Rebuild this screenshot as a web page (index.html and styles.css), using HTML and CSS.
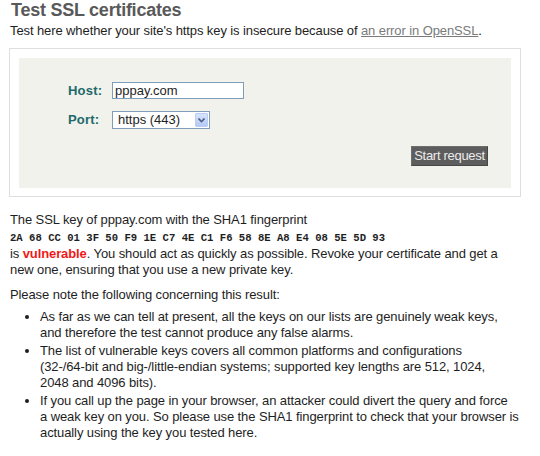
FILE: index.html
```html
<!DOCTYPE html>
<html lang="en">
<head>
    <meta charset="UTF-8">
    <meta name="viewport" content="width=device-width, initial-scale=1.0">
    <title>Test SSL certificates</title>
    <link rel="stylesheet" href="styles.css">
</head>
<body>
    <div class="page">
        <h1>Test SSL certificates</h1>
        <p class="intro">Test here whether your site's https key is insecure because of <a href="#">an error in OpenSSL</a>.</p>

        <div class="panel">
            <form class="check-form">
                <div class="row">
                    <label for="host">Host:</label>
                    <input type="text" id="host" value="pppay.com">
                </div>
                <div class="row">
                    <label for="port">Port:</label>
                    <div class="select-wrap">
                        <select id="port">
                            <option>https (443)</option>
                            <option>imaps (993)</option>
                            <option>pop3s (995)</option>
                        </select>
                        <span class="select-btn">
                            <svg width="7" height="5" viewBox="0 0 7 5"><path d="M0.5 0.5 L3.5 3.5 L6.5 0.5" fill="none" stroke="#4d6185" stroke-width="1.6"/></svg>
                        </span>
                    </div>
                </div>
                <div class="actions">
                    <button type="button">Start request</button>
                </div>
            </form>
        </div>

        <div class="result">
            <p>The SSL key of pppay.com with the SHA1 fingerprint
            <code>2A 68 CC 01 3F 50 F9 1E C7 4E C1 F6 58 8E A8 E4 08 5E 5D 93</code>
            is <strong class="bad">vulnerable</strong>. You should act as quickly as possible. Revoke your certificate and get a new one, ensuring that you use a new private key.</p>

            <p class="note">Please note the following concerning this result:</p>
            <ul>
                <li>As far as we can tell at present, all the keys on our lists are genuinely weak keys,<br>
                    and therefore the test cannot produce any false alarms.</li>
                <li>The list of vulnerable keys covers all common platforms and configurations<br>
                    (32-/64-bit and big-/little-endian systems; supported key lengths are 512, 1024,<br>
                    2048 and 4096 bits).</li>
                <li>If you call up the page in your browser, an attacker could divert the query and force<br>
                    a weak key on you. So please use the SHA1 fingerprint to check that your browser is<br>
                    actually using the key you tested here.</li>
            </ul>
        </div>
    </div>
</body>
</html>
```

FILE: styles.css
```css
* {
    margin: 0;
    padding: 0;
    box-sizing: border-box;
}

body {
    background: #fff;
    color: #1e1e1e;
    font-family: "Liberation Sans", Arial, sans-serif;
    font-size: 13px;
    line-height: 16px;
    letter-spacing: -0.1px;
}

.page {
    width: 512px;
    margin-left: 9px;
}

h1 {
    font-size: 18px;
    line-height: 21px;
    font-weight: bold;
    color: #595959;
    padding-left: 2px;
    letter-spacing: -0.25px;
}

.intro {
    margin-top: 2px;
    padding-left: 1px;
}

.intro a {
    color: #7a7a7a;
}

/* form box */
.panel {
    margin-top: 9px;
    border: 1px solid #dedede;
    padding: 9px 9px 8px;
}

.check-form {
    background: #f2f2ed;
    padding: 24px 23px 22px 49px;
}

.row {
    display: flex;
    align-items: center;
    margin-bottom: 12px;
}

.row label {
    width: 44px;
    font-weight: bold;
    color: #1d6a6a;
    letter-spacing: 0.2px;
}

.row input {
    width: 132px;
    height: 17px;
    border: 1px solid #7f9db9;
    padding: 0 2px;
    font: inherit;
    color: #1e1e1e;
}

.select-wrap {
    position: relative;
    width: 98px;
    height: 18px;
}

.select-wrap select {
    appearance: none;
    -webkit-appearance: none;
    width: 100%;
    height: 100%;
    border: 1px solid #7f9db9;
    background: #fff;
    padding: 0 0 0 5px;
    font: inherit;
    color: #1e1e1e;
}

.select-btn {
    position: absolute;
    top: 2px;
    right: 2px;
    width: 13px;
    height: 14px;
    background: linear-gradient(#d7e4fc, #b4c9f4);
    border: 1px solid #b9cdf6;
    border-radius: 1px;
    display: flex;
    align-items: center;
    justify-content: center;
    pointer-events: none;
}

/* collapses with the row margin above */
.actions {
    display: flex;
    justify-content: flex-end;
    margin-top: 17px;
}

button {
    width: 77px;
    height: 20px;
    background: #5d5d5d;
    color: #ececec;
    border: 1px solid #474747;
    border-top-color: #6e6e6e;
    border-left-color: #6e6e6e;
    font: inherit;
    letter-spacing: -0.3px;
}

/* result text */
.result {
    margin-top: 15px;
    padding-left: 1px;
}

.result p {
    margin-bottom: 9px;
}

.result .note {
    margin-bottom: 6px;
}

code {
    display: block;
    margin-top: 2px;
    font-family: "Liberation Mono", "Courier New", monospace;
    font-size: 10.6px;
    font-weight: bold;
    line-height: 16px;
    letter-spacing: 0;
}

.bad {
    color: #f01818;
}

ul {
    padding-left: 30px;
    width: 525px;
}

li {
    margin-bottom: 2px;
}
```
